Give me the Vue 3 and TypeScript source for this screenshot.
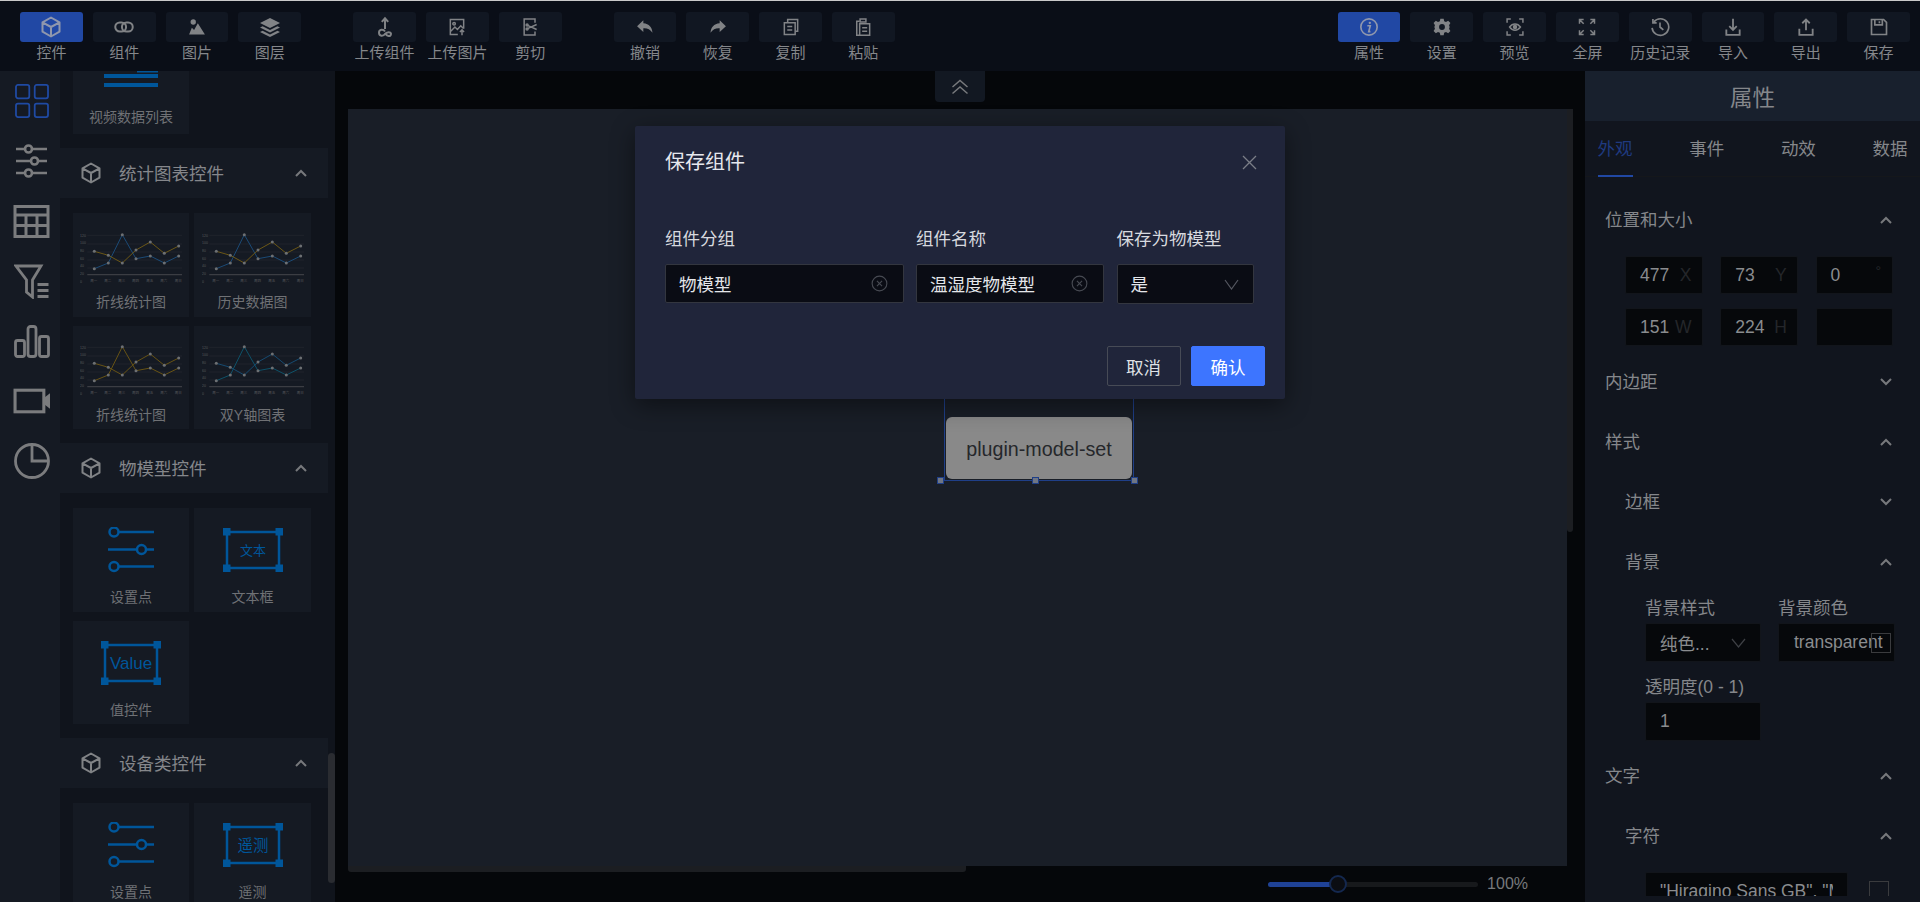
<script setup lang="ts">
const ic: Record<string, string> = {
  cube: '<path d="M12 2.5 20.5 7.3v9.4L12 21.5 3.5 16.7V7.3z M3.5 7.3 12 12l8.5-4.7M12 12v9.5" fill="none" stroke="currentColor" stroke-width="2" stroke-linejoin="round"/>',
  link: '<g fill="none" stroke="currentColor" stroke-width="2.400"><rect x="1.500" y="6.500" width="13" height="11" rx="5.500"/><rect x="9.500" y="6.500" width="13" height="11" rx="5.500"/></g>',
  image: '<circle cx="7.500" cy="6" r="3.200" fill="currentColor"/><path d="M2.500 21 5.800 13l2.700 2.500L13 7.500 21.500 21z" fill="currentColor"/>',
  layers: '<g fill="currentColor"><path d="M12 3 22 8l-10 5L2 8z"/><path d="M4.600 11.200 12 15l7.400-3.800L22 12.500l-10 5-10-5z"/><path d="M4.600 15.700 12 19.500l7.400-3.800L22 17l-10 5-10-5z"/></g>',
  upcomp: '<g fill="none" stroke="currentColor" stroke-width="2"><path d="M12 14V3.500M8.800 6.800 12 3.300l3.200 3.500"/><path d="M12 16.500c-1.500-2.300-6-2.500-6 1.300s4.500 3.500 6 1.200c1.500-2.300 6-2.500 6-.2 0 3.500-4.500 2.500-6-1"/></g>',
  upimg: '<g fill="none" stroke="currentColor" stroke-width="1.800"><path d="M13 21H4V3h16v11"/><circle cx="8.500" cy="8" r="1.500"/><path d="m4.500 17 5-5 3 3 4-4.500 3 3M18 22v-6M15.500 18l2.500-2.500 2.500 2.500"/></g>',
  cut: '<g fill="none" stroke="currentColor" stroke-width="1.800"><path d="M18 7V2.500H5v19h13v-4"/><path d="M9 10l11 5M9 14l11-5"/><circle cx="8.500" cy="9.500" r="1.200"/><circle cx="8.500" cy="14.500" r="1.200"/></g>',
  undo: '<path d="M10 4 2.500 11 10 18v-4.500c4.500-.3 8 .8 11 5.500-.5-6.500-4-11-11-11.500z" fill="currentColor"/>',
  redo: '<path d="M14 4l7.500 7-7.500 7v-4.500c-4.500-.3-8 .8-11 5.500.5-6.500 4-11 11-11.500z" fill="currentColor"/>',
  copy: '<g fill="none" stroke="currentColor" stroke-width="1.800"><path d="M8 6V3h12v14h-3"/><path d="M4 7h13v14H4z"/><path d="M7.500 11.500h6M7.500 15.500h6"/></g>',
  paste: '<g fill="none" stroke="currentColor" stroke-width="1.800"><path d="M8 5H4.500v17H8"/><path d="M8 8h12v14H8zM8.500 2.500h7V6h-7z"/><path d="M11 13h6M11 17h6"/></g>',
  info: '<circle cx="12" cy="12" r="9.800" fill="none" stroke="currentColor" stroke-width="2"/><circle cx="13" cy="7" r="1.400" fill="currentColor"/><path d="M10 10.500h3.500l-1.800 7h2" fill="none" stroke="currentColor" stroke-width="2"/>',
  gear: '<path fill="currentColor" fill-rule="evenodd" d="M10 2h4l.6 3 2.200 1 2.600-1.600 2.700 2.900L20.400 10l.6 1v2l-.6 1 1.700 2.700-2.700 2.900-2.600-1.600-2.200 1-.6 3h-4l-.6-3-2.200-1-2.600 1.600-2.700-2.900L3.600 14 3 13v-2l.6-1-1.700-2.700 2.700-2.900 2.600 1.600 2.200-1zM12 8.500a3.500 3.500 0 1 0 0 7 3.500 3.500 0 0 0 0-7z"/>',
  eye: '<g fill="none" stroke="currentColor" stroke-width="1.800"><path d="M2.500 7V2.500H7M17 2.500h4.500V7M21.500 17v4.500H17M7 21.500H2.500V17"/><path d="M5.500 12c3.500-5 9.500-5 13 0-3.500 5-9.500 5-13 0z"/><circle cx="12" cy="12" r="1.800" fill="currentColor"/></g>',
  full: '<g fill="none" stroke="currentColor" stroke-width="1.800"><path d="M3 8V3h5M3 3l5 5M21 8V3h-5M21 3l-5 5M3 16v5h5M3 21l5-5M21 16v5h-5M21 21l-5-5"/></g>',
  history: '<g fill="none" stroke="currentColor" stroke-width="2"><path d="M4.500 6A10 10 0 1 1 2.500 13"/><path d="M3.500 2.500V7H8M12 6.500V12l4 3.500"/></g>',
  imp: '<g fill="none" stroke="currentColor" stroke-width="2.200"><path d="M12 2v13M7.500 11l4.500 4.500 4.500-4.500"/><path d="M4 15v6.500h16V15"/></g>',
  exp: '<g fill="none" stroke="currentColor" stroke-width="2.200"><path d="M12 16V3M7.500 7.500 12 3l4.500 4.500"/><path d="M4 14v7.500h16V14"/></g>',
  save: '<g fill="none" stroke="currentColor" stroke-width="2"><path d="M3 3h14.500L21 6.500V21H3z"/><path d="M7 3.500v6h9v-6M12.500 5v2.500"/></g>',
  grid: '<g fill="none" stroke="currentColor" stroke-width="1.800"><rect x="1" y="1" width="13.500" height="13.500" rx="2"/><rect x="20" y="1" width="13.500" height="13.500" rx="2"/><rect x="1" y="20" width="13.500" height="13.500" rx="2"/><rect x="20" y="20" width="13.500" height="13.500" rx="2"/></g>',
  sliders: '<g fill="none" stroke="currentColor" stroke-width="2.600"><path d="M1 5h9M17 5h15M1 17h15M23 17h9M1 29h9M17 29h15"/><circle cx="13.500" cy="5" r="3.500"/><circle cx="19.500" cy="17" r="3.500"/><circle cx="13.500" cy="29" r="3.500"/></g>',
  table: '<path fill="none" stroke="currentColor" stroke-width="3" d="M1.500 1.500h33v30h-33zM1.500 10h33M1.500 20.500h33M12.500 10v21.500M23.500 10v21.500"/>',
  filter: '<g fill="none" stroke="currentColor" stroke-width="2.800"><path d="M1.500 2h25L18 16v17l-6-5V16z"/></g><path d="M23 19h11v3H23zM23 25h11v3H23zM23 31h11v3H23z" fill="currentColor"/>',
  bars: '<g fill="none" stroke="currentColor" stroke-width="2.800"><rect x="1.500" y="15.500" width="9" height="16" rx="2"/><rect x="14" y="1.500" width="8" height="30" rx="2.500"/><rect x="25.500" y="11.500" width="9" height="20" rx="2"/></g>',
  camera: '<g fill="none" stroke="currentColor" stroke-width="3"><rect x="2" y="2" width="28" height="21"/></g><path d="M30 9.500 36 5v15l-6-4.500z" fill="currentColor"/>',
  pie: '<g fill="none" stroke="currentColor" stroke-width="2.800"><circle cx="18" cy="18" r="16.500"/><path d="M18 1.500V18h16.500"/></g>',
}

const group = (names: [string, string][]) => names.map(([label, icon], i) => ({
  label, icon, on: label === '控件' || label === '属性', big: icon === 'cube' || icon === 'layers' || icon === 'upcomp', key: label + i,
}))
const tools = [
  group([['控件', 'cube'], ['组件', 'link'], ['图片', 'image'], ['图层', 'layers']]),
  group([['上传组件', 'upcomp'], ['上传图片', 'upimg'], ['剪切', 'cut']]),
  group([['撤销', 'undo'], ['恢复', 'redo'], ['复制', 'copy'], ['粘贴', 'paste']]),
]
const rightTools = group([['属性', 'info'], ['设置', 'gear'], ['预览', 'eye'], ['全屏', 'full'], ['历史记录', 'history'], ['导入', 'imp'], ['导出', 'exp'], ['保存', 'save']])
const sideIcons = [
  { n: 'grid', w: 34, h: 34, vb: '0 0 34.500 34.500', on: true },
  { n: 'sliders', w: 33, h: 34, vb: '0 0 33 34', on: false },
  { n: 'table', w: 37, h: 33, vb: '0 0 36 33', on: false },
  { n: 'filter', w: 36, h: 35, vb: '0 0 35 35', on: false },
  { n: 'bars', w: 36, h: 33, vb: '0 0 36 33', on: false },
  { n: 'camera', w: 37, h: 26, vb: '0 0 36 25', on: false },
  { n: 'pie', w: 36, h: 36, vb: '0 0 36 36', on: false },
]

const xs = [14.3, 28.3, 42.3, 56, 70.3, 84.3, 98.7]
const sa = [40.7, 35, 6.7, 30.7, 28, 35, 28]
const sb = [23.3, 27.3, 35, 22, 14, 25.3, 18]
const line = (ys: number[]) => ys.map((y, i) => `${xs[i]},${y}`).join(' ')
const pa = line(sa)
const pb = line(sb)
const gridY = [7.3, 16, 24, 32, 40]
const week = ['周一', '周二', '周三', '周四', '周五', '周六', '周日']
const yTicks = ['120', '100', '80', '60', '40', '20', '0']

type Card = { label: string; kind: string; a?: string; b?: string; text?: string; fs?: number }
const sections: { title: string; cards: Card[] }[] = [
  { title: '统计图表控件', cards: [
    { label: '折线统计图', kind: 'chart', a: '#1b4a76', b: '#6b5716' },
    { label: '历史数据图', kind: 'chart', a: '#1b4a76', b: '#6b5716' },
    { label: '折线统计图', kind: 'chart', a: '#665214', b: '#665214' },
    { label: '双Y轴图表', kind: 'chart', a: '#0e5168', b: '#154a70' },
  ] },
  { title: '物模型控件', cards: [
    { label: '设置点', kind: 'set' },
    { label: '文本框', kind: 'box', text: '文本', fs: 13 },
    { label: '值控件', kind: 'box', text: 'Value', fs: 17 },
  ] },
  { title: '设备类控件', cards: [
    { label: '设置点', kind: 'set' },
    { label: '遥测', kind: 'box', text: '遥测', fs: 15.5 },
  ] },
]
const tabs = ['外观', '事件', '动效', '数据']
const posInputs = [
  { v: '477', u: 'X' }, { v: '73', u: 'Y' }, { v: '0', u: '°' },
  { v: '151', u: 'W' }, { v: '224', u: 'H' }, { v: '', u: '' },
]
</script>

<template>
  <div class="app">
    <header class="topbar">
      <div v-for="(g, gi) in tools" :key="gi" class="tgroup">
        <div v-for="t in g" :key="t.key" class="titem">
          <div class="tbtn" :class="{ on: t.on }"><svg class="ticon" :class="{ big: t.big }" viewBox="0 0 24 24" v-html="ic[t.icon]"></svg></div>
          <span class="tlabel">{{ t.label }}</span>
        </div>
      </div>
      <div class="tgroup tright">
        <div v-for="t in rightTools" :key="t.key" class="titem">
          <div class="tbtn" :class="{ on: t.on }"><svg class="ticon" :class="{ big: t.big }" viewBox="0 0 24 24" v-html="ic[t.icon]"></svg></div>
          <span class="tlabel">{{ t.label }}</span>
        </div>
      </div>
    </header>

    <main class="main">
      <nav class="rail">
        <div v-for="s in sideIcons" :key="s.n" class="rail-cell" :class="{ on: s.on }">
          <svg :width="s.w" :height="s.h" :viewBox="s.vb" v-html="ic[s.n]"></svg>
        </div>
      </nav>

      <aside class="lib">
        <div class="lib-body">
          <div class="first-wrap">
            <div class="first-card">
              <svg width="54" height="17" viewBox="0 0 54 17" class="first-art"><path d="M33 0h21v1.500H33zM0 3h54v4H0zM0 12h54v4H0z" fill="#00569a"/></svg>
              <span class="card-label">视频数据列表</span>
            </div>
          </div>
          <section v-for="sec in sections" :key="sec.title">
            <div class="sec-head">
              <svg class="sec-cube" viewBox="0 0 24 24" v-html="ic.cube"></svg>
              <span class="sec-title">{{ sec.title }}</span>
              <svg class="chev sec-chev" viewBox="0 0 12 8"><polyline points="1,7 6,2 11,7" /></svg>
            </div>
            <div class="cards">
              <div v-for="(c, ci) in sec.cards" :key="ci" class="card">
                <div class="art">
                  <svg v-if="c.kind === 'chart'" width="102" height="55" viewBox="0 0 102 55">
                    <line v-for="y in gridY" :key="y" x1="7.300" x2="102" :y1="y" :y2="y" stroke="#23272e" stroke-width=".8" />
                    <line x1="7.300" x2="102" y1="46.700" y2="46.700" stroke="#44474c" stroke-width="1" />
                    <text v-for="(t, i) in yTicks" :key="t" x="0" :y="8.500 + i * 7.700" class="tiny">{{ t }}</text>
                    <text v-for="(d, i) in week" :key="d" :x="xs[i] - 4" y="53.500" class="tiny">{{ d }}</text>
                    <polyline :points="pa" fill="none" :stroke="c.a" stroke-width="1" />
                    <polyline :points="pb" fill="none" :stroke="c.b" stroke-width="1" />
                    <circle v-for="(y, i) in sa" :key="'a' + i" :cx="xs[i]" :cy="y" r="1.500" fill="#6d7073" />
                    <circle v-for="(y, i) in sb" :key="'b' + i" :cx="xs[i]" :cy="y" r="1.500" fill="#6d7073" />
                  </svg>
                  <svg v-else-if="c.kind === 'set'" width="46" height="46" viewBox="0 0 46 46" class="blue-art">
                    <path d="M11 5h35M0 22.500h28M37 22.500h9M11 39.500h35" />
                    <circle cx="6" cy="5" r="4.500" />
                    <circle cx="33.500" cy="22.500" r="4.500" />
                    <circle cx="6" cy="39.500" r="4.500" />
                  </svg>
                  <svg v-else width="60" height="44" viewBox="0 0 60 44" class="blue-art">
                    <rect x="4" y="4" width="52" height="36" />
                    <g class="handles">
                      <rect x="0" y="0" width="7.500" height="7.500" /><rect x="52.500" y="0" width="7.500" height="7.500" />
                      <rect x="0" y="36.500" width="7.500" height="7.500" /><rect x="52.500" y="36.500" width="7.500" height="7.500" />
                    </g>
                    <text x="30" y="22" text-anchor="middle" dominant-baseline="central" class="art-text" :style="{ fontSize: c.fs + 'px' }">{{ c.text }}</text>
                  </svg>
                </div>
                <span class="card-label">{{ c.label }}</span>
              </div>
            </div>
          </section>
        </div>
        <div class="lib-thumb"></div>
      </aside>

      <section class="stage">
        <div class="collapse-tab">
          <svg width="18" height="16" viewBox="0 0 18 16" fill="none" stroke="#77797c" stroke-width="1.500"><path d="M1.500 8 9 1.500 16.500 8M1.500 14.500 9 8l7.500 6.500" /></svg>
        </div>
        <div class="canvas">
          <div class="selection">
            <div class="plugin">plugin-model-set</div>
            <i class="hd hd-l"></i><i class="hd hd-m"></i><i class="hd hd-r"></i>
          </div>
          <div class="sb-v"></div>
          <div class="sb-h"></div>
        </div>
        <div class="zoom-row">
          <div class="track"><div class="fill"></div><div class="knob"></div></div>
          <span class="zoom-val">100%</span>
        </div>
      </section>

      <aside class="props">
        <div class="props-title">属性</div>
        <div class="tabs">
          <span v-for="(t, i) in tabs" :key="t" class="tab" :class="{ on: i === 0 }">{{ t }}</span>
        </div>
        <div class="props-body">
          <div class="row"><span>位置和大小</span><svg class="chev" viewBox="0 0 12 8"><polyline points="1,7 6,2 11,7" /></svg></div>
          <div class="pos-grid">
            <div v-for="(p, i) in posInputs" :key="i" class="field pos"><span>{{ p.v }}</span><em :class="{ deg: p.u === '°' }">{{ p.u }}</em></div>
          </div>
          <div class="row mt7"><span>内边距</span><svg class="chev down" viewBox="0 0 12 8"><polyline points="1,7 6,2 11,7" /></svg></div>
          <div class="row"><span>样式</span><svg class="chev" viewBox="0 0 12 8"><polyline points="1,7 6,2 11,7" /></svg></div>
          <div class="row sub"><span>边框</span><svg class="chev down" viewBox="0 0 12 8"><polyline points="1,7 6,2 11,7" /></svg></div>
          <div class="row sub"><span>背景</span><svg class="chev" viewBox="0 0 12 8"><polyline points="1,7 6,2 11,7" /></svg></div>
          <div class="bg-grid">
            <label class="lbl">背景样式</label>
            <label class="lbl">背景颜色</label>
            <div class="field tall sel"><span>纯色...</span><svg width="15" height="10" viewBox="0 0 15 10" fill="none" stroke="#3e4045" stroke-width="1.200"><path d="M1 1l6.500 8L14 1" /></svg></div>
            <div class="field tall color"><span>transparent</span><i class="swatch"></i></div>
            <label class="lbl lbl-opacity">透明度(0 - 1)</label>
            <div class="field op"><span>1</span></div>
          </div>
          <div class="row"><span>文字</span><svg class="chev" viewBox="0 0 12 8"><polyline points="1,7 6,2 11,7" /></svg></div>
          <div class="row sub"><span>字符</span><svg class="chev" viewBox="0 0 12 8"><polyline points="1,7 6,2 11,7" /></svg></div>
          <div class="font-row">
            <div class="field font"><span>"Hiragino Sans GB", "Microsoft YaHei"</span></div>
            <i class="check"></i>
          </div>
        </div>
      </aside>
    </main>

    <div class="modal">
      <div class="modal-head">
        <span class="modal-title">保存组件</span>
        <svg width="15" height="15" viewBox="0 0 15 15" stroke="#7b7e87" stroke-width="1.300" fill="none" class="close"><path d="M1 1l13 13M14 1 1 14" /></svg>
      </div>
      <div class="form">
        <label>组件分组</label>
        <label>组件名称</label>
        <label>保存为物模型</label>
        <div class="minput"><span>物模型</span><svg class="clear" viewBox="0 0 18 18"><circle cx="9" cy="9" r="7.800" /><path d="M6.300 6.300l5.400 5.400M11.700 6.300l-5.400 5.400" /></svg></div>
        <div class="minput"><span>温湿度物模型</span><svg class="clear" viewBox="0 0 18 18"><circle cx="9" cy="9" r="7.800" /><path d="M6.300 6.300l5.400 5.400M11.700 6.300l-5.400 5.400" /></svg></div>
        <div class="minput msel"><span>是</span><svg width="15" height="11" viewBox="0 0 15 11" fill="none" stroke="#555861" stroke-width="1.200"><path d="M1 1l6.500 9L14 1" /></svg></div>
      </div>
      <div class="modal-foot">
        <button class="btn">取消</button>
        <button class="btn primary">确认</button>
      </div>
    </div>
  </div>
</template>

<style>
html, body { margin: 0; background: #05070a; }
</style>

<style scoped>
* { box-sizing: border-box; }
.app {
  width: 1920px; height: 902px; position: relative; overflow: hidden; display: flex; flex-direction: column;
  border-top: 1px solid #c9c9c9; background: #05070a; color: #85878b;
  font-family: "Liberation Sans", "Noto Sans CJK SC", sans-serif;
}
.topbar { height: 70px; flex: none; display: flex; gap: 52px; padding: 0 10px 0 20px; background: #0a0e17; }
.tgroup { display: flex; gap: 10px; }
.tright { margin-left: auto; }
.titem { width: 62.800px; display: flex; flex-direction: column; align-items: center; }
.tbtn { margin-top: 11px; width: 62.800px; height: 30px; border-radius: 3px; background: #111722; color: #818386; display: flex; align-items: center; justify-content: center; }
.tbtn.on { background: #2148a4; color: #8f97ad; }
.ticon { width: 20px; height: 20px; }
.ticon.big { width: 24px; height: 24px; }
.tlabel { margin-top: 1px; font-size: 15px; line-height: 20px; color: #85878b; white-space: nowrap; }

.main { flex: 1; display: flex; min-height: 0; }
.rail { width: 60px; flex: none; background: #151a23; display: flex; flex-direction: column; color: #7b7c7e; }
.rail-cell { height: 60px; display: flex; align-items: center; justify-content: center; padding-left: 3px; }
.rail-cell.on { color: #1f4aa3; }

.lib { width: 275px; flex: none; position: relative; background: #10141c; overflow: hidden; }
.lib-body { width: 268px; }
.lib-thumb { position: absolute; left: 268px; top: 682px; width: 7px; height: 130px; border-radius: 4px; background: #2a2c31; }
.first-wrap { padding: 0 13px 14px; }
.first-card { width: 116px; height: 63px; background: #151a23; display: flex; flex-direction: column; align-items: center; }
.first-card .card-label { margin-top: 19px; }
.sec-head { height: 50px; background: #151a23; display: flex; align-items: center; padding: 0 21px 0 18.500px; color: #818386; }
.sec-cube { width: 24px; height: 24px; flex: none; }
.sec-title { margin-left: 16.500px; padding-bottom: 2px; font-size: 17.500px; color: #85878b; flex: 1; }
.sec-chev { flex: none; }
.cards { padding: 15px 13px 14px; display: grid; grid-template-columns: 116px 117px; grid-auto-rows: 103.500px; gap: 9px 5px; }
.card { background: #151a23; padding-top: 8px; display: flex; flex-direction: column; align-items: center; }
.art { height: 68px; display: flex; align-items: center; justify-content: center; flex: none; }
.card-label { margin-top: 3px; font-size: 14px; line-height: 20px; color: #6f7175; white-space: nowrap; }
.tiny { font-size: 3.500px; fill: #55585c; font-family: "Liberation Sans", "Noto Sans CJK SC", sans-serif; }
.blue-art { fill: none; stroke: #00569a; stroke-width: 2.500; }
.handles { fill: #00569a; stroke: none; }
.art-text { fill: #00569a; stroke: none; font-family: "Liberation Sans", "Noto Sans CJK SC", sans-serif; }
.chev { width: 12px; height: 8px; fill: none; stroke: #77797c; stroke-width: 2; }
.chev.down { transform: rotate(180deg); }

.stage { flex: 1; min-width: 0; position: relative; display: flex; flex-direction: column; padding: 38px 18px 0 13px; }
.collapse-tab { position: absolute; left: 600px; top: 0; width: 50px; height: 31px; background: #121822; border-radius: 0 0 4px 4px; display: flex; align-items: center; justify-content: center; }
.canvas { height: 757px; flex: none; position: relative; background: #191e27; }
.selection { position: absolute; left: 596px; top: 150px; width: 190px; height: 222px; border: 1px solid #1f3f88; border-top: 0; display: flex; flex-direction: column; justify-content: flex-end; padding: 0 1px 1px; }
.plugin { height: 62px; background: #898989; border-radius: 6px; color: #25272b; font-size: 19.700px; padding-top: 2px; display: flex; align-items: center; justify-content: center; }
.hd { position: absolute; bottom: -3px; width: 5px; height: 5px; background: #6f7684; outline: 1px solid #1f3f88; }
.hd-l { left: -7px; }
.hd-m { left: 87.500px; }
.hd-r { right: -3.500px; }
.sb-v { position: absolute; left: 100%; top: 0; width: 6px; height: 423px; background: #1c1e22; border-radius: 0 0 3px 3px; }
.sb-h { position: absolute; left: 0; top: 100%; width: 618px; height: 6px; background: #1c1e22; border-radius: 0 0 3px 3px; }
.zoom-row { flex: 1; display: flex; align-items: center; justify-content: flex-end; padding: 0 39px 0 0; gap: 9px; }
.track { width: 210px; height: 5px; background: #17191c; border-radius: 3px; position: relative; }
.fill { width: 66px; height: 5px; background: #1f4296; border-radius: 3px 0 0 3px; }
.knob { position: absolute; left: 61px; top: -6.500px; width: 18px; height: 18px; border-radius: 50%; background: #0b0d12; border: 2px solid #14284f; }
.zoom-val { font-size: 16px; color: #77797c; }

.props { width: 335px; flex: none; background: #11151e; position: relative; }
.props-title { height: 50px; background: #18202d; font-size: 22.500px; color: #85878b; display: flex; align-items: center; justify-content: center; }
.tabs { height: 56px; display: flex; gap: 56.700px; padding: 0 0 0 12.500px; border-bottom: 1px solid #15171b; }
.tab { font-size: 17.500px; line-height: 57px; height: 56px; color: #85878b; }
.tab.on { color: #1f3a80; border-bottom: 2px solid #2148a4; }
.props-body { height: 719px; overflow: hidden; padding: 14px 28px 0 20px; position: relative; }
.row { height: 60px; display: flex; align-items: center; justify-content: space-between; font-size: 17.500px; color: #85878b; }
.row span { padding-bottom: 6px; }
.row .chev { margin-bottom: 2px; }
.row.sub { padding-left: 20px; }
.mt7 { margin-top: 7px; }
.pos-grid { margin: 5px -2px 0 20px; display: grid; grid-template-columns: repeat(3, 77.500px); grid-auto-rows: 38px; gap: 14px 17.800px; }
.field { background: #06080b; border: 1px solid #12151b; border-radius: 2px; display: flex; align-items: center; font-size: 17.500px; color: #8a8c8f; padding-left: 14px; white-space: nowrap; overflow: hidden; }
.pos em { font-style: normal; margin-left: auto; margin-right: 10px; color: #24262a; }
.pos em.deg { margin-top: -8px; font-size: 14px; margin-right: 11px; }
.bg-grid { margin: 3px -2px 6px 40px; display: grid; grid-template-columns: 115.500px 116.500px; column-gap: 17.500px; grid-template-rows: 24px 42px 13px 24px 42px; }
.lbl { font-size: 17.500px; line-height: 24px; color: #85878b; white-space: nowrap; }
.tall { height: 39px; margin-top: 3px; }
.field.op { grid-column: 1; grid-row: 5; height: 39px; margin-top: 3px; }
.lbl-opacity { grid-column: 1 / 3; grid-row: 4; }
.sel { justify-content: space-between; padding-right: 14px; }
.color { position: relative; padding-left: 15px; }
.swatch { position: absolute; right: 3px; top: 9px; width: 20px; height: 20px; border: 1px solid #3a3b3e; }
.font-row { margin: 5px 0 0 40px; display: flex; align-items: flex-start; }
.field.font { width: 203px; height: 39px; padding-right: 14px; flex: none; }
.field.font span { overflow: hidden; }
.check { margin: 9px 0 0 21px; width: 20px; height: 20px; border: 1px solid #3a3b3e; flex: none; }

.modal { position: absolute; left: 635px; top: 125px; width: 650px; height: 273px; background: #20253a; box-shadow: 0 6px 24px rgba(0, 0, 0, .45); border-radius: 2px; padding: 0 20px 0 30px; }
.modal-head { height: 72px; display: flex; align-items: center; justify-content: space-between; padding-right: 8px; }
.modal-title { font-size: 20px; color: #e6e8ee; padding-bottom: 4px; }
.form { margin-top: 28px; display: grid; grid-template-columns: 238.500px 188px 137.500px; column-gap: 12.500px; grid-template-rows: 24px 40px; row-gap: 14px; }
.form label { font-size: 17.500px; line-height: 24px; color: #d7d9df; white-space: nowrap; padding-top: 1px; }
.minput { background: #0a0c14; border: 1px solid #33363f; border-radius: 2px; height: 39px; display: flex; align-items: center; justify-content: space-between; padding: 0 15px 0 13px; font-size: 17.500px; color: #e4e6ea; }
.minput span { padding-bottom: 1px; }
.msel { height: 40px; padding-right: 14px; }
.clear { width: 17px; height: 17px; fill: none; stroke: #474a52; stroke-width: 1.200; }
.modal-foot { margin-top: 42px; display: flex; justify-content: flex-end; gap: 10.500px; }
.btn { width: 74px; height: 40px; border: 1px solid #474b56; border-radius: 2px; background: transparent; color: #dfe1e5; font-size: 17.500px; font-family: inherit; padding: 0; }
.btn.primary { background: #3d75ff; border-color: #3d75ff; color: #fff; }
</style>
